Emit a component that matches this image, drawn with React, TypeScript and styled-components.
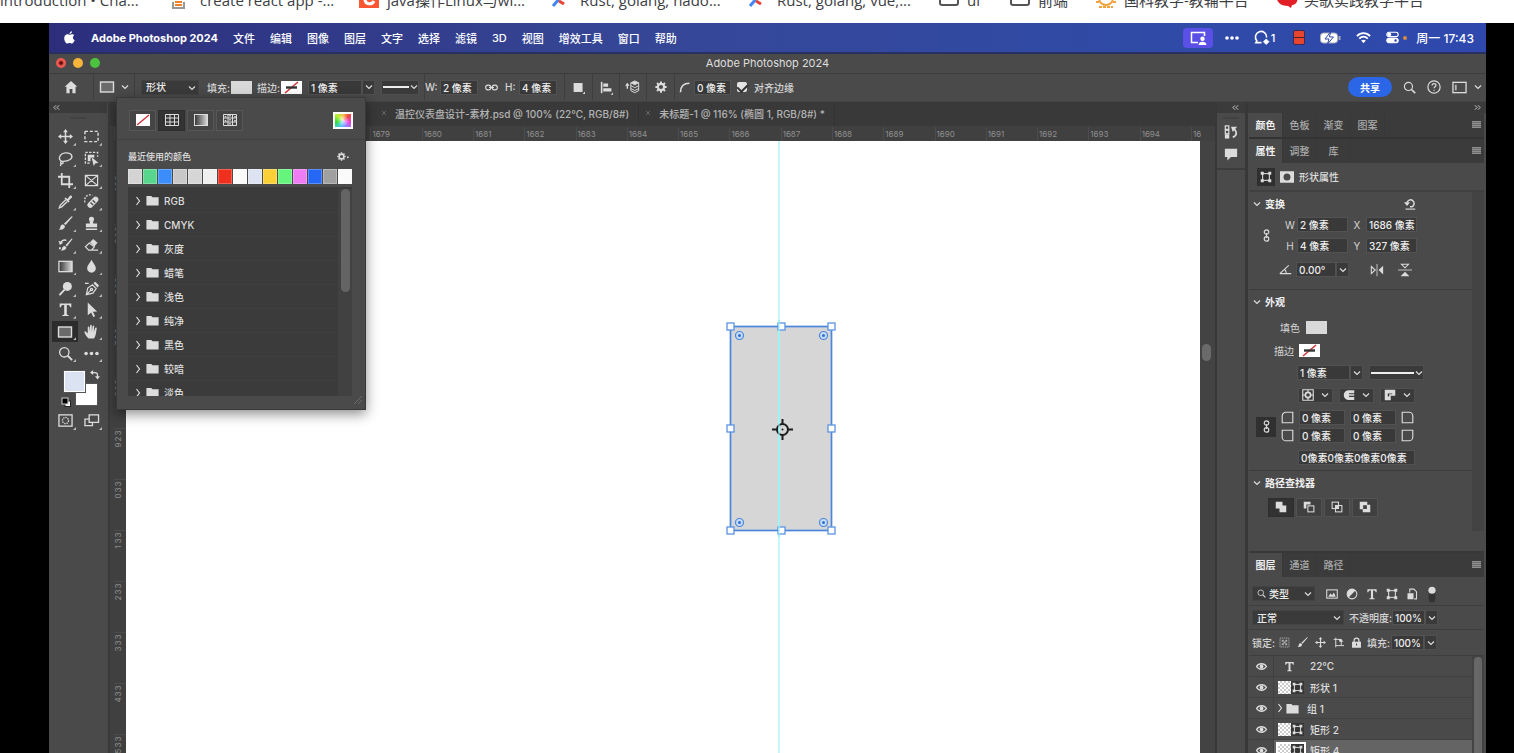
import React from 'react';
import styled, { createGlobalStyle } from 'styled-components';

const UI = `Inter, "Noto Sans CJK SC", sans-serif`;

const Global = createGlobalStyle`
  * { box-sizing: border-box; }
  html, body, #root { height: 100%; }
  body { margin: 0; overflow: hidden; background: #000; font-family: ${UI}; font-size: 10px; color: #dedede; }
  button, input, select { font: inherit; color: inherit; margin: 0; padding: 0; border: 0; background: none; border-radius: 0; }
  h1, h2, ul { margin: 0; padding: 0; font: inherit; list-style: none; }
  svg { display: block; flex: none; overflow: visible; }
`;

/* ---------- icons ---------- */

const Svg = styled.svg<{ $s?: number }>`
  width: ${p => p.$s ?? 16}px;
  height: ${p => p.$s ?? 16}px;
  fill: none;
  stroke: #dcdcdc;
  stroke-width: 1.4;
`;
const S = '#dcdcdc';
const solid = { fill: S, stroke: 'none' };

const ICONS: Record<string, React.ReactNode> = {
  home: <path {...solid} d="M8 1 .8 7.6h2V15h3.600v-4.600h3.200V15h3.600V7.600h2z" />,
  rect: <rect x="1.500" y="3" width="13" height="10" fill="#6b6b6b" />,
  search: <><circle cx="6.700" cy="6.700" r="5" /><path d="m10.400 10.400 4.600 4.600" strokeWidth="2" /></>,
  help: <><circle cx="8" cy="8" r="7" /><path d="M5.800 6.300c.1-3 4.600-2.800 4.500-.2 0 1.600-2.200 1.700-2.200 3.400M8.100 11v1.400" /></>,
  workspace: <><rect x="1" y="2.500" width="14" height="11" /><path d="M4 5v6" strokeWidth="2" stroke="#b5b5b5" /></>,
  link: <><rect x=".8" y="5" width="6.400" height="6" rx="3" /><rect x="8.800" y="5" width="6.400" height="6" rx="3" /><path d="M5 8h6" /></>,
  linkV: <><rect x="5.200" y="1" width="5.600" height="5.600" rx="2.800" /><rect x="5.200" y="9.400" width="5.600" height="5.600" rx="2.800" /><path d="M8 5v6" /></>,
  pathOps: <><rect x="2" y="2.500" width="11" height="11" {...solid} /><path {...solid} d="M13 16h3v-3z" /></>,
  align: <><path d="M2 1v14" strokeWidth="2" /><path {...solid} d="M4 3h6v4H4zM4 9h10v4H4z" /><path {...solid} d="M13 17h3v-3z" /></>,
  arrange: <><path d="M1.500 5v5" strokeWidth="1.600" /><path {...solid} d="M1.500 3 4 6.500H-1z" /><path d="m5.500 3.200 4.500-2.200 4.500 2.200L10 5.400z" fill={S} strokeWidth="1" /><path d="m5.500 6.500 4.500 2.200 4.500-2.200M5.500 9.800 10 12l4.500-2.200M5.500 3.200v9L10 14.500l4.500-2.300v-9" strokeWidth="1.100" /></>,
  gear: <><circle cx="8" cy="8" r="4.200" strokeWidth="2.800" /><path strokeWidth="2.600" d="M8 .5v2.500M8 13v2.500M.5 8H3M13 8h2.500M2.700 2.700l1.700 1.700M11.600 11.600l1.700 1.700M2.700 13.300l1.700-1.700M11.600 4.400l1.700-1.700" /></>,
  arc: <path d="M2 15C2 7 6 3 14 3" strokeWidth="2.200" />,
  move: <><path d="M8 2v12M2 8h12" strokeWidth="1.600" /><path {...solid} d="M8 0l2.600 3.400H5.400zM8 16l2.600-3.400H5.400zM0 8l3.400-2.600v5.200zM16 8l-3.400-2.600v5.200z" /></>,
  marquee: <rect x="1" y="2.500" width="14" height="11" strokeDasharray="3.200 2" strokeWidth="1.500" />,
  lasso: <><path d="M4 11C-.5 9 1.500 2.500 8 2c7-.5 8.500 4.500 5 7-2.500 1.700-6 2.200-9 2zm0 0c-2 .5-1.500 3 .6 2.500C6 13 5.500 11.200 4 11zm-.5 2.200L2.500 16" /></>,
  objSel: <><path d="M6 13H1.500V1.500h13V6" strokeDasharray="2.500 1.500" /><path {...solid} d="M4 4h7v3H7v4H4z" /><path {...solid} d="m8 6.500 7.500 6.300-3.300.3L10.400 16z" /></>,
  crop: <path d="M4 0v12h12M0 4h12v12" strokeWidth="1.900" />,
  frame: <path d="M1.500 2.500h13v11h-13zM1.500 2.500l13 11M14.500 2.500l-13 11" strokeWidth="1.300" />,
  dropper: <><path {...solid} d="M10 5.200 12.600 2c1.300-1.500 3.400.6 2 2L11.500 7l.8.9-1.100 1.100-4.300-4.300L8 3.700z" /><path d="M8.300 6.200 2.300 12l-.9 2.700L4 13.700l6-5.800" /></>,
  heal: <><path d="M1 9C-.5 3 4-.5 9 1.500" strokeDasharray="2 1.400" /><rect x="2.500" y="5.800" width="14" height="6" rx="3" transform="rotate(-45 9.500 8.800)" {...solid} /><path d="m7 9 2.700 2.700M9.300 6.600l2.700 2.700" stroke="#4a4a4a" /></>,
  brush: <path {...solid} d="M15.500 1 8 9.700 6.300 8.200 14.300.6c.7-.5 1.500-.2 1.200.4zM5.600 9l1.800 1.600c.3 2.600-2.800 4.700-6.700 3.700 1.800-.8 1.500-2 2-3.500.4-1.300 1.700-2 2.900-1.800z" />,
  stamp: <path {...solid} d="M8 .8c2 0 3 1.500 2.700 3C10.300 5.300 9.500 6.500 9.800 8H14v4H2V8h4.200c.3-1.500-.5-2.700-.9-4.200C5 2.300 6 .8 8 .8zM2 13.400h12v1.600H2z" />,
  history: <><path {...solid} d="m15.500 2-6 8L8 8.800 14.500 1.500zM7.300 9.600l1.600 1.300c0 2-2 4-6 3.400 1.500-.8 1.300-2 1.700-3 .4-1 1.500-1.900 2.700-1.700z" /><path d="M2.500 7.500C3 4 6 2.500 9 3.500" /><path {...solid} d="M.5 4 2 8.500 5.500 6zM1 11h2v2H1z" /></>,
  eraser: <><path {...solid} d="m9.800 2 4.700 4.200L11 10 6.300 5.700z" /><path d="m5.500 6.500-4 4L5 14h3l3-3.500zM8 14h7" strokeWidth="1.300" /></>,
  gradient: <rect x="1" y="2.500" width="14" height="11" fill="url(#toolGrad)" />,
  drop: <path {...solid} d="M8 .8c1.800 4 4.600 5.800 4.600 9A4.600 4.600 0 0 1 8 14.600a4.600 4.600 0 0 1-4.600-4.800C3.400 6.600 6.200 4.800 8 .8z" />,
  dodge: <><circle cx="10" cy="5.800" r="4.800" {...solid} /><path d="M7 9.200 1.500 15" strokeWidth="2" /></>,
  pen: <><path d="M2.500 14.500 4 7.500 9 4l4 4-3.500 5zM2.500 14.500 7.500 9.500" strokeWidth="1.300" /><circle cx="8" cy="9" r="1.200" /><path {...solid} d="m10 2 2-1.300L16 4.800 14.300 7z" /><path d="M1 2.500h4" /></>,
  type: <path {...solid} d="M1.800 1.500h12.400v4h-1.300c-.2-1.700-.9-2.300-3.500-2.300v9.600c0 .9.700 1 2 1V15H4.600v-1.200c1.300 0 2-.1 2-1V3.200c-2.600 0-3.300.6-3.500 2.300H1.800z" />,
  arrow: <path {...solid} d="M4 .5 14 10l-4.500.3 2.400 4.800-2 .9-2.300-4.900L4 14z" />,
  hand: <path {...solid} d="M5 15.500C3 14 1.500 11.500.6 9.300c-.5-1.500 1-1.900 1.800-.9L4 10V3.800c0-1.400 1.700-1.400 1.800 0l.3 4.400.4-6.400c.1-1.400 1.800-1.400 1.800 0v6.400l.9-5.800c.3-1.300 1.800-1.100 1.700.2l-.5 6 1.500-4.300c.5-1.200 2-.7 1.700.5-.7 3-.7 8.200-3 10.700z" />,
  dots: <><circle cx="2.200" cy="8" r="1.900" {...solid} /><circle cx="8" cy="8" r="1.900" {...solid} /><circle cx="13.800" cy="8" r="1.900" {...solid} /></>,
  mask: <><rect x="1" y="2" width="14" height="12" /><circle cx="8" cy="8" r="3.300" strokeDasharray="1.500 1" /></>,
  screens: <><rect x="5.500" y="2" width="10" height="8" /><path d="M5.500 6.500H1v7h8V10" /></>,
  swap: <><path d="M4 4h4a4 4 0 0 1 4 4v3" strokeWidth="2" /><path {...solid} d="M5 0v8L0 4zM8 10h8l-4 5z" /></>,
  folder: <path {...solid} d="M.5 2.500h6L8 4h7.500v10H.5z" />,
  boundary: <><rect x="3.500" y="3.500" width="9" height="9" strokeWidth="1.400" /><path {...solid} d="M1 1h4v4H1zM11 1h4v4h-4zM1 11h4v4H1zM11 11h4v4h-4z" /></>,
  maskFull: <path {...solid} fillRule="evenodd" d="M0 1.500h16v13H0zM8 4a4 4 0 1 0 0 8 4 4 0 0 0 0-8z" />,
  reset: <><path d="M4 6.200A4.800 4.800 0 1 1 11 11.500H8" strokeWidth="2" /><path {...solid} d="M0 5.500h8L4 10.500z" /><path d="M2 14.800h13" strokeWidth="1.500" /></>,
  angle: <path d="M1 13h14M1 13 12 3M9 13c0-2-.6-3.300-1.800-4.800" />,
  flipH: <><path d="M8 1v14" stroke="#aaa" /><path d="M1.500 4v8L6 8z" strokeWidth="1.200" /><path {...solid} d="M15 3v10L9.800 8z" /></>,
  flipV: <><path d="M0 8h16" stroke="#aaa" /><path d="M4 1.500h8L8 5.500z" strokeWidth="1.200" /><path {...solid} d="M3 15h10L8 10z" /></>,
  history2: <><rect x="1.500" y="1" width="4" height="4" /><rect x="1.500" y="6" width="4" height="4" /><rect x="1" y="10.500" width="5" height="5" {...solid} /><path d="M10 14c5-2 5-6 2-9" strokeWidth="2" /><path {...solid} d="M8 2h7l-5 6z" /></>,
  comment: <path {...solid} d="M1 2h14v9.500H8L3.800 15.500v-4H1z" />,
  strokeAlign: <><path d="M1 1h14v14H1z" strokeWidth="1.500" /><circle cx="8" cy="8" r="3.500" strokeWidth="2.200" /><path d="M8 1v3M8 12v3M1 8h3M12 8h3" /></>,
  caps: <path {...solid} d="M7 1.500h8v4H8v1.500h7v2H8v1.500h7v4H7C-1 14-1 2 7 1.500z" />,
  corners: <path {...solid} fillRule="evenodd" d="M1 1h14v8H9v6H1zM5 6v4h2V7h4V6z" />,
  cTL: <path d="M1.500 14.500V6a4.500 4.500 0 0 1 4.500-4.500h8.500v13z" />,
  cTR: <path d="M1.500 1.500H10A4.500 4.500 0 0 1 14.500 6v8.500h-13z" />,
  cBL: <path d="M1.500 1.500h13v13H6A4.500 4.500 0 0 1 1.500 10z" />,
  cBR: <path d="M1.500 1.500h13V10a4.500 4.500 0 0 1-4.500 4.500H1.500z" />,
  unite: <path {...solid} d="M1 1h9v5h5v9H6v-5H1z" />,
  minus: <><path {...solid} d="M1 1h9v3.500H4.500V10H1z" /><rect x="6.500" y="6.500" width="8" height="8" /></>,
  intersect: <><rect x="1.500" y="1.500" width="8.500" height="8.500" /><rect x="6" y="6" width="8.500" height="8.500" /><path {...solid} d="M6 6h4v4H6z" /></>,
  exclude: <path {...solid} fillRule="evenodd" d="M1 1h10v4h4v10H5v-4H1zM5.500 5.500v5h5v-5z" />,
  image: <><rect x="1" y="2.500" width="14" height="11" /><path {...solid} d="M3 11.500 6 7l2 2.500L10.500 6l2.500 5.500z" /></>,
  adjust: <><circle cx="8" cy="8" r="6.500" /><path {...solid} d="M12.600 3.400A6.500 6.500 0 1 0 3.400 12.600z" /></>,
  smart: <><path d="M5 6V1.500h5.500L14 5v9.500h-3" /><rect x="2" y="7" width="8" height="8" {...solid} /></>,
  toggle: <><rect x="3.500" y="2" width="9" height="17" rx="4.500" fill="#333" stroke="none" /><circle cx="8" cy="3" r="4.800" {...solid} /></>,
  lockPix: <><rect x="1.500" y="1.500" width="13" height="13" stroke="#aaa" strokeDasharray="2 1" /><path fill="#aaa" stroke="none" d="M4 4h3v3H4zM9 4h3v3H9zM6.500 6.500h3v3h-3zM4 9h3v3H4zM9 9h3v3H9z" /></>,
  artboard: <><path d="M4 1v14M1 3.500h11M4 12.500h12" /><path d="M12 4v8" /><path {...solid} d="M9 3h3l3 4h-6z" /></>,
  lock: <><path d="M4.500 8V5a3.500 3.500 0 0 1 7 0v3" strokeWidth="1.800" /><path {...solid} fillRule="evenodd" d="M1.500 7h13v8.500h-13zM7.200 9.500v3h1.600v-3z" /></>,
  eye: <><path d="M.8 8C4 2.600 12 2.600 15.200 8 12 13.400 4 13.400.8 8z" strokeWidth="2" /><circle cx="8" cy="8" r="2.800" {...solid} /></>,
  apple: <path fill="#fff" stroke="none" d="M11.100.3c.1 1.700-1.400 3.400-3.100 3.400C7.800 2.100 9.400.5 11.100.3zM13.800 5.300c-2.400 1.600-1.900 4.900.6 5.900-.6 1.900-2 4.200-3.500 4.300-1.100 0-1.500-.7-2.800-.7s-1.700.7-2.800.7C3.300 15.500 1.500 12 1.500 9c0-3.300 2.100-5 4.100-5 1.200 0 2 .7 2.900.7.800 0 1.700-.8 3.200-.8.900 0 1.600.5 2.100 1.400z" />,
  cast: <><path d="M8 12.500H1.500v-10h13V6" stroke="#fff" strokeWidth="1.500" /><path fill="#fff" stroke="none" d="M12.500 6.500a2.200 2.200 0 1 1 0 4.400 2.200 2.200 0 0 1 0-4.400zM8.500 15c0-4.500 8-4.500 8 0z" /></>,
  chat: <><path d="M8 13.500H2l1-2a6 6 0 1 1 10.500-3.500" stroke="#fff" strokeWidth="1.700" /><path d="M13 9.500 16 12.500 13 15.500 10 12.500z" stroke="#fff" fill="#fff" strokeWidth=".8" /></>,
  wifi: <><path d="M1 6.500c4-4.300 10-4.300 14 0M3.500 9.200c2.700-2.700 6.300-2.700 9 0" stroke="#fff" strokeWidth="2" /><path fill="#fff" stroke="none" d="M5.500 11.300c1.600-1.300 3.400-1.300 5 0L8 14z" /></>,
  control: <><rect x="1" y="1.500" width="14" height="5.500" rx="2.700" stroke="#fff" /><circle cx="4" cy="4.200" r="2.400" fill="#fff" stroke="none" /><rect x="1" y="9" width="14" height="5.500" rx="2.700" fill="#fff" stroke="#fff" /><circle cx="11.800" cy="11.800" r="1.500" fill="#3048a8" stroke="none" /></>,
};

const Icon = ({ n, s }: { n: string; s?: number }) => (
  <Svg viewBox="0 0 16 16" $s={s} aria-hidden="true">{ICONS[n]}</Svg>
);

const Chevron = ({ right = false }: { right?: boolean }) => (
  <Svg viewBox="0 0 8 8" $s={8} aria-hidden="true">
    <path d={right ? 'M2.500 0 5.500 4 2.500 8' : 'M1 2.500 4 5.500 7 2.500'} strokeWidth="1.200" />
  </Svg>
);

const Double = ({ right = false }: { right?: boolean }) => (
  <Svg viewBox="0 0 8 8" $s={7} aria-hidden="true">
    <path d={right ? 'M1 1.500 3.500 4 1 6.500M4.500 1.500 7 4 4.500 6.500' : 'M3.500 1.500 1 4l2.500 2.500M7 1.500 4.500 4 7 6.500'} strokeWidth="1" />
  </Svg>
);

const StrokeArt = styled.svg`
  width: 21px;
  height: 13px;
`;
const NoStroke = () => (
  <StrokeArt viewBox="0 0 21 13" aria-hidden="true">
    <rect width="21" height="13" fill="#fff" />
    <path d="M4 12 17 1" stroke="#d3343c" strokeWidth="1.600" />
    <path d="M5 6.500h11" stroke="#333" strokeWidth="2.400" />
  </StrokeArt>
);

/* ---------- browser bookmarks ---------- */

const Page = styled.div`
  height: 100%;
  display: flex;
  flex-direction: column;
`;
const Bookmarks = styled.nav`
  flex: none;
  height: 23px;
  background: #fff;
  display: flex;
  align-items: flex-end;
  padding-bottom: 13px;
  overflow: hidden;
`;
const Bookmark = styled.a<{ $w: number }>`
  flex: none;
  width: ${p => p.$w}px;
  display: flex;
  align-items: flex-end;
  gap: 7px;
  color: #3c4043;
  text-decoration: none;
  white-space: nowrap;
  font: 15px/20px "Open Sans", "Noto Sans CJK SC", sans-serif;
`;
const Fav = styled.svg`
  width: 21px;
  height: 20px;
  fill: none;
`;
const FAVS: Record<string, React.ReactNode> = {
  stack: <><path d="M1 12v6h11v-6" stroke="#999" strokeWidth="2" /><path d="M3 15h7M3 12h7" stroke="#f48024" strokeWidth="2" /></>,
  c: <><rect width="20" height="18" fill="#fc5531" /><path d="M15 11c-2 4-9 4-9-2" stroke="#fff" strokeWidth="3" /></>,
  cross: <><path d="M1 16l6-7" stroke="#4285f4" strokeWidth="3" /><path d="M7 11l5 3" stroke="#ea4335" strokeWidth="3" /></>,
  folder: <rect x="1" y="2" width="18" height="13" rx="2" stroke="#555" strokeWidth="2" />,
  bear: <><circle cx="10" cy="8" r="7" stroke="#f2a33c" strokeWidth="2" /><path d="M0 12h20" stroke="#f2a33c" strokeWidth="2" strokeDasharray="3 14" /><path d="M3 17h14" stroke="#f2a33c" strokeWidth="2" strokeDasharray="3 1" /></>,
  red: <path d="M10 0c14 0 14 15 6 15l-1 3-3-2C-3 16-2 0 10 0z" fill="#e01f26" />,
};
const BOOKMARKS = [
  ['introduction • Cha...', '', 172],
  ['create react app -...', 'stack', 187],
  ['java操作Linux与wi...', 'c', 193],
  ['Rust, golang, hado...', 'cross', 197],
  ['Rust, golang, vue,...', 'cross', 190],
  ['ui', 'folder', 71],
  ['前端', 'folder', 86],
  ['国科教学-教辅平台', 'bear', 180],
  ['头歌实践教学平台', 'red', 170],
] as const;

/* ---------- desktop ---------- */

const Screen = styled.main`
  flex: 1;
  min-height: 0;
  margin: 0 28px 0 49px;
  background: #4a4a4a;
  display: flex;
  flex-direction: column;
`;
const MenuBar = styled.header`
  flex: none;
  height: 31px;
  display: flex;
  align-items: center;
  padding: 0 14px;
  background: linear-gradient(90deg, #2c2e7c, #364696 40%, #304ba6 75%, #2f48ae);
  border-bottom: 2px solid #27305f;
  color: #fff;
  font-size: 11px;
  font-weight: 500;
`;
const AppName = styled.strong`
  margin: 0 15px;
  font-weight: 700;
  white-space: nowrap;
`;
const MenuItems = styled.nav`
  display: flex;
  gap: 15px;
  flex: 1;
`;
const MenuItem = styled.button`white-space: nowrap;`;
const Status = styled.div`
  display: flex;
  align-items: center;
  gap: 15px;
`;
const CastBadge = styled.span`
  width: 30px;
  height: 20px;
  margin-right: -3px;
  border-radius: 4px;
  background: #5b50e6;
  display: grid;
  place-items: center;
`;
const Inline = styled.span<{ $gap?: number; $end?: number }>`
  display: flex;
  align-items: center;
  gap: ${p => p.$gap ?? 2}px;
  margin-right: ${p => p.$end ?? 0}px;
  white-space: nowrap;
`;
const RedChip = styled.span`
  width: 12px;
  height: 15px;
  border-radius: 2px;
  border: 1px solid #3a2a55;
  background: linear-gradient(#e8452f 6px, #4d2030 6px, #4d2030 7px, #e8452f 7px);
`;
const BatteryArt = styled.svg`
  width: 21px;
  height: 12px;
`;
const OrangeDot = styled.span`
  width: 4px;
  height: 4px;
  border-radius: 50%;
  background: #d98a3e;
`;
const Clock = styled.time`
  font-size: 12px;
  margin: 0 -2px 0 -6px;
  white-space: nowrap;
`;

const TitleBar = styled.div`
  flex: none;
  height: 20px;
  display: grid;
  grid-template-columns: 1fr auto 1fr;
  align-items: center;
  padding: 0 7px 1px;
  border-bottom: 1px solid #3c3c3c;
  font-size: 11px;
`;
const Lights = styled.div`display: flex; gap: 7px;`;
const Light = styled.button<{ $c: string; $dot?: boolean }>`
  width: 10px;
  height: 10px;
  border-radius: 50%;
  background: ${p => (p.$dot ? `radial-gradient(circle, #5c0d0a 1px, ${p.$c} 3px)` : p.$c)};
`;

/* ---------- options bar ---------- */

const OptionsBar = styled.div`
  flex: none;
  height: 28px;
  padding-bottom: 1px;
  display: flex;
  align-items: center;
  border-bottom: 1px solid #444;
  font-weight: 500;
`;
const Cell = styled.div<{ $w: number; $gap?: number; $sep?: boolean }>`
  flex: none;
  width: ${p => p.$w}px;
  height: 26px;
  display: flex;
  align-items: center;
  justify-content: center;
  gap: ${p => p.$gap ?? 0}px;
  border-right: ${p => (p.$sep ? '1px solid #3e3e3e' : '0')};
`;
const IconButton = styled.button<{ $on?: boolean }>`
  display: flex;
  align-items: center;
  background: ${p => (p.$on ? '#2f2f2f' : 'none')};
`;
const Fields = styled.div<{ $gap: number; $pad?: number }>`
  flex: none;
  display: flex;
  align-items: center;
  gap: ${p => p.$gap}px;
  padding-left: ${p => p.$pad ?? 0}px;
`;
const Label = styled.label<{ $w?: number }>`
  flex: none;
  width: ${p => (p.$w ? `${p.$w}px` : 'auto')};
  white-space: nowrap;
  color: #d4d4d4;
`;
const Field = styled.input<{ $w: number }>`
  width: ${p => p.$w}px;
  height: 15px;
  line-height: 13px;
  padding: 0 0 0 2px;
  background: #393939;
  border: 1px solid #525252;
  color: #ececec;
  font-weight: 500;
`;
const SelectWrap = styled.span<{ $w: number }>`
  position: relative;
  flex: none;
  width: ${p => p.$w}px;
  height: 15px;
  svg { position: absolute; right: 3px; top: 4px; pointer-events: none; }
`;
const Select = styled.select<{ $pad?: number }>`
  appearance: none;
  display: block;
  width: 100%;
  height: 15px;
  padding-left: ${p => p.$pad ?? 4}px;
  background: #3a3a3a;
  border: 1px solid #434343;
  color: #ececec;
  font-weight: 500;
`;
const DropButton = styled.button<{ $w: number }>`
  flex: none;
  width: ${p => p.$w}px;
  height: 15px;
  display: flex;
  align-items: center;
  justify-content: space-around;
  background: #3a3a3a;
  border: 1px solid #4f4f4f;
`;
const LineSample = styled.span`
  flex: 1;
  height: 2px;
  margin: 0 1px;
  background: #eee;
`;
const Swatch = styled.button`
  width: 21px;
  height: 13px;
  background: #d9d9d9;
`;
const Tick = styled.input`
  appearance: none;
  width: 10px;
  height: 10px;
  border-radius: 2px;
  background: #e4e4e4;
  display: grid;
  place-items: center;
  &:checked::before {
    content: '';
    width: 5px;
    height: 8px;
    border: solid #333;
    border-width: 0 2px 2px 0;
    transform: rotate(45deg);
  }
`;
const Spacer = styled.div`flex: 1;`;
const Share = styled.button`
  width: 44px;
  height: 20px;
  border-radius: 10px;
  background: #2a66e6;
  color: #fff;
  font-weight: 600;
`;
const RightTools = styled.div`
  display: flex;
  align-items: center;
  gap: 11px;
  padding-right: 4px;
`;
const WorkspaceButton = styled(IconButton)`gap: 7px;`;

const Combo = ({ w, value, label, id }: { w: number; value: string; label: string; id?: string }) => (
  <Fields $gap={0}>
    <Field $w={w} id={id} aria-label={label} defaultValue={value} />
    <DropButton $w={13} aria-label={`${label}选项`}><Chevron /></DropButton>
  </Fields>
);
const DropDown = ({ w, value, label, pad }: { w: number; value: string; label: string; pad?: number }) => (
  <SelectWrap $w={w}>
    <Select aria-label={label} $pad={pad}><option>{value}</option></Select>
    <Chevron />
  </SelectWrap>
);

/* ---------- work area ---------- */

const Work = styled.div`
  flex: 1;
  min-height: 0;
  display: flex;
  position: relative;
`;
const ToolColumn = styled.aside`
  flex: none;
  width: 61px;
  padding: 0 4px 0 3px;
  border-right: 2px solid #3a3a3a;
`;
const DockHeader = styled.div<{ $right?: boolean }>`
  flex: none;
  height: 11px;
  margin: 0 -3px;
  padding: 0 6px 0 4px;
  display: flex;
  align-items: center;
  justify-content: ${p => (p.$right ? 'flex-end' : 'flex-start')};
  background: #3b3b3b;
`;
const Grip = styled.div`
  width: 16px;
  height: 2px;
  margin: 4px auto 7px;
  background: #414141;
`;
const ToolGrid = styled.div`
  height: 238px;
  display: grid;
  grid-template-columns: 1fr 1fr;
  grid-auto-rows: 1fr;
`;
const Tool = styled.button<{ $on?: boolean }>`
  position: relative;
  display: grid;
  place-items: center;
  background: ${p => (p.$on ? '#2c2c2c' : 'none')};
  &::after {
    content: '';
    position: absolute;
    right: 2px;
    bottom: 2px;
    width: 3px;
    height: 3px;
    background: #bbb;
    clip-path: polygon(100% 0, 100% 100%, 0 100%);
  }
`;
const Colors = styled.div`
  position: relative;
  height: 44px;
`;
const Color = styled.button<{ $x: number; $y: number; $c: string }>`
  position: absolute;
  left: ${p => p.$x}px;
  top: ${p => p.$y}px;
  width: 21px;
  height: 21px;
  background: ${p => p.$c};
  border: 1px solid #fff;
  outline: 1px solid #555;
`;
const Corner = styled.button<{ $x: number; $y: number }>`
  position: absolute;
  left: ${p => p.$x}px;
  top: ${p => p.$y}px;
`;
const ModeRow = styled.div`
  height: 24px;
  display: grid;
  grid-template-columns: 1fr 1fr;
`;

const Doc = styled.section`
  flex: 1;
  min-width: 0;
  display: flex;
  flex-direction: column;
  background: #404040;
`;
const DocTabs = styled.div`
  flex: none;
  height: 24px;
  display: flex;
  background: #393939;
  padding-left: 265px;
`;
const DocTab = styled.button`
  display: flex;
  align-items: center;
  gap: 8px;
  padding: 0 9px 2px 6px;
  border-right: 1px solid #333;
  color: #b4b4b4;
  font-weight: 500;
  white-space: nowrap;
`;
const HRuler = styled.div`
  flex: none;
  height: 15px;
  display: flex;
  padding: 1px 14px 0 4px;
  background: #404040;
  overflow: hidden;
`;
const HTick = styled.span<{ $last?: boolean }>`
  flex: ${p => (p.$last ? '0 0 10px' : '1 1 0')};
  border-left: 1px solid #4c4c4c;
  padding-left: 1px;
  font-size: 8px;
  line-height: 14px;
  color: #909090;
`;
const DocBody = styled.div`
  flex: 1;
  min-height: 0;
  display: flex;
`;
const VRuler = styled.div`
  flex: none;
  width: 16px;
  padding-top: 32px;
  overflow: hidden;
  background: #404040;
`;
const VTick = styled.div`
  height: 51px;
  margin-left: 4px;
  padding: 1px 4px 0 0;
  border-top: 1px solid #4c4c4c;
  display: flex;
  flex-direction: column;
  align-items: center;
  font-size: 8px;
  color: #909090;
`;
const Digit = styled.span`
  height: 6px;
  line-height: 6px;
  transform: rotate(-90deg);
`;
const Canvas = styled.div`
  flex: 1;
  position: relative;
  background: #fff;
  overflow: hidden;
`;
const Guide = styled.div`
  position: absolute;
  left: 652px;
  top: 0;
  bottom: 0;
  width: 2px;
  background: #9ff3f5;
  opacity: .6;
`;
const ShapeArt = styled.svg`
  position: absolute;
  left: 598px;
  top: 179px;
  width: 114px;
  height: 217px;
`;
const VScroll = styled.div`
  flex: none;
  width: 15px;
  padding-top: 203px;
  background: #434343;
`;
const Thumb = styled.div`
  width: 9px;
  height: 17px;
  margin-left: 2px;
  border-radius: 5px;
  background: #6a6a6a;
`;

/* ---------- fill popover ---------- */

const Popover = styled.div`
  position: absolute;
  left: 67px;
  top: -5px;
  width: 250px;
  height: 313px;
  padding: 0 13px 0 11px;
  display: flex;
  flex-direction: column;
  background: #4a4a4a;
  border: 1px solid #383838;
  box-shadow: 0 4px 12px rgba(0, 0, 0, .45);
`;
const FillTypes = styled.div`
  height: 42px;
  margin: 0 -13px 0 -11px;
  padding: 3px 12px 0;
  display: flex;
  align-items: center;
  gap: 2px;
  border-bottom: 1px solid #404040;
`;
const FillType = styled.button<{ $on?: boolean }>`
  width: 27px;
  height: 21px;
  display: grid;
  place-items: center;
  background: ${p => (p.$on ? '#333' : '#454545')};
  border: 1px solid ${p => (p.$on ? '#2e2e2e' : '#575757')};
`;
const Picker = styled.button`
  width: 20px;
  height: 17px;
  border: 2px solid #fff;
  background: radial-gradient(circle, rgba(255,255,255,.8), transparent 60%),
    conic-gradient(#f0c03c, #e44, #e4d, #88f, #4cf, #3d3, #be3, #f0c03c);
`;
const RecentHead = styled.h2`
  height: 29px;
  padding: 3px 3px 0 0;
  display: flex;
  align-items: center;
  justify-content: space-between;
  font-size: 9px;
  font-weight: 500;
`;
const Recents = styled.div`
  display: grid;
  grid-template-columns: repeat(15, 1fr);
  gap: 1px;
`;
const Recent = styled.button<{ $c: string }>`
  height: 15px;
  background: ${p => p.$c};
  border: 1px solid rgba(255, 255, 255, .25);
`;
const Groups = styled.div`
  height: 209px;
  margin-top: 3px;
  padding-top: 2px;
  display: flex;
  overflow: hidden;
  background: #3b3b3b;
`;
const GroupList = styled.ul`flex: 1;`;
const GroupRow = styled.li`
  height: 24px;
  padding-left: 6px;
  border-bottom: 1px solid #3f3f3f;
  display: flex;
  align-items: center;
  gap: 4px;
  font-weight: 500;
  span { padding-left: 1px; }
`;
const GroupScroll = styled.div`
  width: 14px;
  background: #414141;
`;
const GroupThumb = styled.div`
  width: 9px;
  height: 103px;
  margin: 0 3px;
  border-radius: 5px;
  background: #646464;
`;
const Grab = styled.div`display: flex; justify-content: flex-end; margin-right: -10px;`;

/* ---------- right docks ---------- */

const Strip = styled.aside`
  flex: none;
  width: 32px;
  padding: 0 3px;
  border: solid #383838;
  border-width: 0 2px;
`;
const StripBox = styled.div`
  height: 57px;
  margin: 0 -3px;
  border-bottom: 2px solid #3c3c3c;
  display: flex;
  flex-direction: column;
  align-items: center;
  gap: 8px;
`;
const StripGrip = styled(Grip)`margin-bottom: -2px;`;
const Panels = styled.aside`
  flex: none;
  width: 239px;
  padding: 0 2px 0 1px;
  display: flex;
  flex-direction: column;
  overflow: hidden;
  border-left: 1px solid #383838;
`;
const Tabs = styled.div<{ $gap?: boolean }>`
  flex: none;
  height: ${p => (p.$gap ? 26 : 24)}px;
  border-bottom: ${p => (p.$gap ? '2px solid #333' : '0')};
  display: flex;
  background: #3b3b3b;
`;
const Tab = styled.button<{ $on?: boolean }>`
  width: 34px;
  padding-bottom: 2px;
  background: ${p => (p.$on ? '#4a4a4a' : 'none')};
  color: ${p => (p.$on ? '#f0f0f0' : '#aaa')};
  border-right: 1px solid #383838;
  font-weight: ${p => (p.$on ? 700 : 500)};
`;
const PanelMenu = styled.button`
  width: 9px;
  height: 7px;
  margin: 8px 3px 0 auto;
  background: repeating-linear-gradient(#8f8f8f 0 1px, #6e6e6e 1px 2px);
`;
const KindRow = styled.div`
  flex: none;
  height: 29px;
  display: flex;
  align-items: center;
  gap: 5px;
  padding-left: 8px;
  border-bottom: 2px solid #404040;
  font-weight: 500;
`;
const KindButton = styled(IconButton)`padding: 3px;`;
const PropsBody = styled.div`
  flex: none;
  display: flex;
  height: 361px;
  border-bottom: 2px solid #383838;
`;
const PropsMain = styled.div`flex: 1;`;
const PropsScroll = styled.div`
  width: 12px;
  height: 339px;
  background: #434343;
`;
const Section = styled.section<{ $h: number }>`
  height: ${p => p.$h}px;
  border-bottom: 1px solid #3c3c3c;
`;
const SectionHead = styled.h2`
  height: 25px;
  display: flex;
  align-items: center;
  gap: 4px;
  padding: 0 56px 2px 4px;
  color: #f0f0f0;
  font-weight: 700;
  button:last-child { margin-left: auto; }
`;
const Transform = styled.div`
  display: grid;
  grid-template-columns: 34px 14px 51px 18px 51px;
  grid-auto-rows: 15px;
  row-gap: 6px;
  justify-items: center;
  align-items: center;
`;
const LinkCell = styled.div`grid-row: span 2;`;
const AngleRow = styled.div`
  display: flex;
  align-items: center;
  gap: 4px;
  margin: 9px 0 0 30px;
`;
const Flips = styled.div`
  display: flex;
  gap: 14px;
  margin-left: 17px;
`;
const Row = styled.div<{ $h: number; $pad: number; $gap: number }>`
  height: ${p => p.$h}px;
  padding-left: ${p => p.$pad}px;
  display: flex;
  align-items: center;
  gap: ${p => p.$gap}px;
`;
const CornerGrid = styled.div`
  display: grid;
  grid-template-columns: 20px 13px 46px 46px 13px;
  grid-auto-rows: 15px;
  gap: 3px 5px;
  padding: 4px 0 0 7px;
  align-items: center;
`;
const LinkButton = styled.button`
  grid-row: span 2;
  width: 20px;
  height: 20px;
  background: #303030;
  display: grid;
  place-items: center;
`;
const OpButton = styled.button<{ $on?: boolean }>`
  width: 26px;
  height: 19px;
  display: grid;
  place-items: center;
  background: ${p => (p.$on ? '#323232' : '#404040')};
  border: 1px solid ${p => (p.$on ? '#2e2e2e' : '#525252')};
`;
const LayerBar = styled.div<{ $h: number; $top?: number }>`
  flex: none;
  height: ${p => p.$h}px;
  padding: ${p => p.$top ?? 0}px 0 0 3px;
  display: flex;
  align-items: center;
  gap: 5px;
  border-bottom: 1px solid #3e3e3e;
  font-weight: 500;
`;
const IconSet = styled.div<{ $gap: number; $pad: number }>`
  display: flex;
  gap: ${p => p.$gap}px;
  padding: 0 ${p => p.$pad}px;
`;
const TypeSelect = styled(SelectWrap)`
  svg:first-child { left: 5px; top: 3px; right: auto; }
`;
const LayerArea = styled.div`
  flex: 1;
  min-height: 0;
  display: flex;
  overflow: hidden;
`;
const LayerList = styled.ul`flex: 1;`;
const Layer = styled.li<{ $on?: boolean }>`
  height: 21px;
  display: flex;
  align-items: center;
  border-bottom: 1px solid #414141;
  background: ${p => (p.$on ? 'linear-gradient(90deg, transparent 25px, #646464 25px)' : 'none')};
  font-weight: 500;
`;
const Eye = styled.button`
  flex: none;
  width: 25px;
  height: 100%;
  border-right: 1px solid #404040;
  display: grid;
  place-items: center;
`;
const Thumbs = styled.span<{ $on?: boolean }>`
  display: flex;
  align-items: center;
  margin: 0 6px 0 4px;
  background: #363636;
  outline: ${p => (p.$on ? '2px solid #fff' : '0')};
  i + svg { margin: 0 1px; }
`;
const Checker = styled.i`
  width: 13px;
  height: 13px;
  background: repeating-conic-gradient(#ccc 0 25%, #fff 0 50%) 0 0 / 4px 4px;
`;
const TextThumb = styled.span`padding: 0 15px 0 10px;`;
const GroupThumbIcon = styled.span`
  display: flex;
  align-items: center;
  gap: 2px;
  padding: 0 8px 0 2px;
`;
const LayerScroll = styled.div`
  width: 12px;
  background: #434343;
  padding: 1px 2px 0;
`;
const LayerThumb = styled.div`
  height: 120px;
  border-radius: 4px;
  background: #676767;
`;

const TOOLS = ['move', 'marquee', 'lasso', 'objSel', 'crop', 'frame', 'dropper', 'heal', 'brush', 'stamp', 'history', 'eraser',
  'gradient', 'drop', 'dodge', 'pen', 'type', 'arrow', 'rect', 'hand', 'search', 'dots'];
const RECENTS = ['#d4d4d4', '#58d68d', '#3a8dfb', '#c8c8c8', '#d6d6d6', '#efefef', '#f0301e', '#fafafa', '#dde3f2', '#fbcf36',
  '#66f57c', '#ee7cf2', '#2668f6', '#a0a0a0', '#fafafa'];
const GROUPS = ['RGB', 'CMYK', '灰度', '蜡笔', '浅色', '纯净', '黑色', '较暗', '淡色'];
const MENUS = ['文件', '编辑', '图像', '图层', '文字', '选择', '滤镜', '3D', '视图', '增效工具', '窗口', '帮助'];
const XLABELS = Array.from({ length: 21 }, (_, i) => 1674 + i);
const YLABELS = Array.from({ length: 12 }, (_, i) => 324 + i);

const handles = [[6, 6], [57, 6], [107, 6], [6, 108], [107, 108], [6, 210], [57, 210], [107, 210]];
const radii = [[15, 15], [99, 15], [15, 202], [99, 202]];

const EyeToggle = () => <Eye aria-label="可见"><Icon n="eye" s={11} /></Eye>;
const ShapeThumb = ({ on }: { on?: boolean }) => <Thumbs $on={on}><Checker /><Icon n="boundary" s={11} /></Thumbs>;
const CloseMark = () => (
  <Svg viewBox="0 0 6 6" $s={6}><path d="M1 1l4 4M5 1 1 5" stroke="#666" strokeWidth="1" /></Svg>
);

export default function App() {
  return (
    <Page>
      <Global />
      <Bookmarks>
        {BOOKMARKS.map(([text, fav, w]) => (
          <Bookmark key={text} href="#" $w={w}>
            {fav && <Fav viewBox="0 0 21 20">{FAVS[fav]}</Fav>}
            {text}
          </Bookmark>
        ))}
      </Bookmarks>
      <Screen>
        <MenuBar>
          <Icon n="apple" s={13} />
          <AppName>Adobe Photoshop 2024</AppName>
          <MenuItems>{MENUS.map(m => <MenuItem key={m}>{m}</MenuItem>)}</MenuItems>
          <Status>
            <CastBadge><Icon n="cast" s={16} /></CastBadge>
            <Svg viewBox="0 0 14 14" $s={14}>
              <g fill="#fff" stroke="none"><circle cx="2" cy="7" r="1.800" /><circle cx="7" cy="7" r="1.800" /><circle cx="12" cy="7" r="1.800" /></g>
            </Svg>
            <Inline $end={3}><Icon n="chat" s={15} />1</Inline>
            <RedChip />
            <BatteryArt viewBox="0 0 21 12">
              <rect x=".5" y="1" width="17" height="10" rx="3" fill="#fff" stroke="#aab" />
              <path d="M19.500 4v4" stroke="#aab" strokeWidth="2" />
              <path d="M10.500 0 5 7h4l-1.500 5L13.500 5h-4z" fill="#fff" stroke="#3048a8" strokeWidth="1" />
            </BatteryArt>
            <Icon n="wifi" s={15} />
            <Inline $gap={4}><Icon n="control" s={13} /><OrangeDot /></Inline>
            <Clock>周一 17:43</Clock>
          </Status>
        </MenuBar>

        <TitleBar>
          <Lights>
            <Light $c="#ee5a50" $dot aria-label="关闭" />
            <Light $c="#f5b43c" aria-label="最小化" />
            <Light $c="#4cc33e" aria-label="缩放" />
          </Lights>
          <h1>Adobe Photoshop 2024</h1>
        </TitleBar>

        <OptionsBar>
          <Cell $w={45} $sep><IconButton aria-label="主页"><Icon n="home" s={14} /></IconButton></Cell>
          <Cell $w={41} $gap={6} $sep><Icon n="rect" /><Chevron /></Cell>
          <Fields $gap={8} $pad={6}>
            <DropDown w={58} value="形状" label="工具模式" />
            <Fields $gap={0}><Label $w={24}>填充:</Label><Swatch aria-label="填充" /></Fields>
          </Fields>
          <Fields $gap={6} $pad={5}>
            <Fields $gap={0}><Label $w={24}>描边:</Label><IconButton aria-label="描边"><NoStroke /></IconButton></Fields>
            <Combo w={54} value="1 像素" label="描边宽度" />
            <DropButton $w={38} aria-label="描边类型"><LineSample /><Chevron /></DropButton>
          </Fields>
          <Cell $w={6} $sep />
          <Label $w={15} htmlFor="optW">W:</Label>
          <Field $w={38} id="optW" defaultValue="2 像素" />
          <Cell $w={27}><IconButton aria-label="链接"><Icon n="link" s={13} /></IconButton></Cell>
          <Label $w={14} htmlFor="optH">H:</Label>
          <Field $w={38} id="optH" defaultValue="4 像素" />
          <Cell $w={8} $sep />
          <Cell $w={28} $sep><IconButton aria-label="路径操作"><Icon n="pathOps" s={13} /></IconButton></Cell>
          <Cell $w={27} $sep><IconButton aria-label="对齐"><Icon n="align" s={13} /></IconButton></Cell>
          <Cell $w={27} $sep><IconButton aria-label="排列"><Icon n="arrange" s={14} /></IconButton></Cell>
          <Cell $w={28} $sep><IconButton aria-label="设置"><Icon n="gear" s={12} /></IconButton></Cell>
          <Cell $w={19}><Icon n="arc" s={12} /></Cell>
          <Field $w={37} aria-label="圆角半径" defaultValue="0 像素" />
          <Fields $gap={7} $pad={6}>
            <Tick type="checkbox" id="snap" defaultChecked />
            <Label htmlFor="snap">对齐边缘</Label>
          </Fields>
          <Spacer />
          <RightTools>
            <Share>共享</Share>
            <IconButton aria-label="搜索"><Icon n="search" s={13} /></IconButton>
            <IconButton aria-label="帮助"><Icon n="help" s={14} /></IconButton>
            <WorkspaceButton aria-label="工作区"><Icon n="workspace" s={15} /><Chevron /></WorkspaceButton>
          </RightTools>
        </OptionsBar>

        <Work>
          <ToolColumn>
            <DockHeader><Double /></DockHeader>
            <Grip />
            <ToolGrid>
              {TOOLS.map(t => <Tool key={t} $on={t === 'rect'} aria-label={t}><Icon n={t} s={t === 'rect' ? 16 : 15} /></Tool>)}
            </ToolGrid>
            <Colors>
              <Color $x={24} $y={20} $c="#fff" aria-label="背景色" />
              <Color $x={12} $y={7} $c="#dbe3f2" aria-label="前景色" />
              <Corner $x={38} $y={6} aria-label="切换颜色"><Icon n="swap" s={10} /></Corner>
              <Corner $x={9} $y={33} aria-label="默认颜色">
                <Svg viewBox="0 0 10 10" $s={10}>
                  <rect x="4" y="4" width="5.500" height="5.500" fill="#fff" stroke="#222" strokeWidth="1" />
                  <rect x="1" y="1" width="6" height="6" fill="#000" stroke="#ccc" strokeWidth="1" />
                </Svg>
              </Corner>
            </Colors>
            <ModeRow>
              <Tool aria-label="快速蒙版"><Icon n="mask" s={15} /></Tool>
              <Tool aria-label="屏幕模式"><Icon n="screens" s={15} /></Tool>
            </ModeRow>
          </ToolColumn>

          <Doc>
            <DocTabs>
              <DocTab><CloseMark />温控仪表盘设计-素材.psd @ 100% (22℃, RGB/8#)</DocTab>
              <DocTab><CloseMark />未标题-1 @ 116% (椭圆 1, RGB/8#) *</DocTab>
            </DocTabs>
            <HRuler>
              {XLABELS.map(n => <HTick key={n}>{n}</HTick>)}
              <HTick $last>16</HTick>
            </HRuler>
            <DocBody>
              <VRuler>
                {YLABELS.map(n => (
                  <VTick key={n}>{String(n).split('').map((d, i) => <Digit key={i}>{d}</Digit>)}</VTick>
                ))}
              </VRuler>
              <Canvas>
                <ShapeArt viewBox="0 0 114 217">
                  <rect x="6.500" y="6.500" width="101" height="204" fill="#d6d6d6" />
                  <path d="M55 0v217" stroke="#9ff3f5" strokeWidth="2" />
                  <rect x="6.500" y="6.500" width="101" height="204" fill="none" stroke="#4a86dc" strokeWidth="1.700" />
                  {handles.map(([x, y]) => (
                    <rect key={`${x}-${y}`} x={x - 3} y={y - 3} width="7" height="7" fill="#fff" stroke="#5b93e4" strokeWidth="1.300" />
                  ))}
                  {radii.map(([x, y]) => (
                    <g key={`${x}-${y}`}>
                      <circle cx={x + .5} cy={y + .5} r="4" fill="#c9dcf6" stroke="#4a86dc" strokeWidth="1.200" />
                      <circle cx={x + .5} cy={y + .5} r="1.500" fill="#2f6fd0" />
                    </g>
                  ))}
                  <g fill="none" stroke="#1c1c1c" strokeWidth="2">
                    <circle cx="58.500" cy="109.500" r="5.500" />
                    <path d="M58.500 99v5M58.500 115v5M48 109.500h5M64 109.500h5" />
                  </g>
                  <circle cx="58.500" cy="109.500" r="1" fill="#1c1c1c" />
                </ShapeArt>
                <Guide />
              </Canvas>
              <VScroll><Thumb /></VScroll>
            </DocBody>
          </Doc>

          <Strip>
            <DockHeader $right><Double /></DockHeader>
            <StripBox>
              <StripGrip />
              <IconButton aria-label="历史记录"><Icon n="history2" s={14} /></IconButton>
              <IconButton aria-label="注释"><Icon n="comment" s={14} /></IconButton>
            </StripBox>
          </Strip>

          <Panels>
            <DockHeader $right><Double right /></DockHeader>
            <Tabs $gap>
              <Tab $on>颜色</Tab><Tab>色板</Tab><Tab>渐变</Tab><Tab>图案</Tab>
              <PanelMenu aria-label="面板菜单" />
            </Tabs>
            <Tabs>
              <Tab $on>属性</Tab><Tab>调整</Tab><Tab>库</Tab>
              <PanelMenu aria-label="面板菜单" />
            </Tabs>
            <KindRow>
              <KindButton $on aria-label="形状"><Icon n="boundary" s={12} /></KindButton>
              <IconButton aria-label="蒙版"><Icon n="maskFull" s={14} /></IconButton>
              形状属性
            </KindRow>
            <PropsBody>
              <PropsMain>
                <Section $h={98}>
                  <SectionHead>
                    <Chevron />变换
                    <IconButton aria-label="重置"><Icon n="reset" s={12} /></IconButton>
                  </SectionHead>
                  <Transform>
                    <LinkCell><Icon n="linkV" s={13} /></LinkCell>
                    <Label htmlFor="pw">W</Label><Field $w={51} id="pw" defaultValue="2 像素" />
                    <Label htmlFor="px">X</Label><Field $w={51} id="px" defaultValue="1686 像素" />
                    <Label htmlFor="ph">H</Label><Field $w={51} id="ph" defaultValue="4 像素" />
                    <Label htmlFor="py">Y</Label><Field $w={51} id="py" defaultValue="327 像素" />
                  </Transform>
                  <AngleRow>
                    <Icon n="angle" s={13} />
                    <Combo w={40} value="0.00°" label="角度" />
                    <Flips>
                      <IconButton aria-label="水平翻转"><Icon n="flipH" s={14} /></IconButton>
                      <IconButton aria-label="垂直翻转"><Icon n="flipV" s={14} /></IconButton>
                    </Flips>
                  </AngleRow>
                </Section>
                <Section $h={181}>
                  <SectionHead><Chevron />外观</SectionHead>
                  <Row $h={24} $pad={31} $gap={6}><Label>填色</Label><Swatch aria-label="填色" /></Row>
                  <Row $h={22} $pad={25} $gap={5}><Label>描边</Label><IconButton aria-label="描边颜色"><NoStroke /></IconButton></Row>
                  <Row $h={23} $pad={48} $gap={6}>
                    <Combo w={53} value="1 像素" label="描边粗细" />
                    <DropButton $w={55} aria-label="线型"><LineSample /><Chevron /></DropButton>
                  </Row>
                  <Row $h={22} $pad={49} $gap={6}>
                    {['strokeAlign', 'caps', 'corners'].map(n => (
                      <DropButton key={n} $w={35} aria-label={n}><Icon n={n} s={12} /><Chevron /></DropButton>
                    ))}
                  </Row>
                  <CornerGrid>
                    <LinkButton aria-label="链接圆角"><Icon n="linkV" s={13} /></LinkButton>
                    <Icon n="cTL" s={13} />
                    <Field $w={46} aria-label="左上" defaultValue="0 像素" />
                    <Field $w={46} aria-label="右上" defaultValue="0 像素" />
                    <Icon n="cTR" s={13} />
                    <Icon n="cBL" s={13} />
                    <Field $w={46} aria-label="左下" defaultValue="0 像素" />
                    <Field $w={46} aria-label="右下" defaultValue="0 像素" />
                    <Icon n="cBR" s={13} />
                  </CornerGrid>
                  <Row $h={28} $pad={49} $gap={0}>
                    <Field $w={117} aria-label="圆角" defaultValue="0像素0像素0像素0像素" />
                  </Row>
                </Section>
                <div>
                  <SectionHead><Chevron />路径查找器</SectionHead>
                  <Row $h={22} $pad={19} $gap={2}>
                    {['unite', 'minus', 'intersect', 'exclude'].map((n, i) => (
                      <OpButton key={n} $on={i === 0} aria-label={n}><Icon n={n} s={12} /></OpButton>
                    ))}
                  </Row>
                </div>
              </PropsMain>
              <PropsScroll />
            </PropsBody>
            <Tabs>
              <Tab $on>图层</Tab><Tab>通道</Tab><Tab>路径</Tab>
              <PanelMenu aria-label="面板菜单" />
            </Tabs>
            <LayerBar $h={29} $top={5}>
              <TypeSelect $w={63}>
                <Icon n="search" s={9} />
                <Select aria-label="类型" $pad={16}><option>类型</option></Select>
                <Chevron />
              </TypeSelect>
              <IconSet $gap={8} $pad={6}>
                {['image', 'adjust', 'type', 'boundary', 'smart', 'toggle'].map(n => (
                  <IconButton key={n} aria-label={n}><Icon n={n} s={12} /></IconButton>
                ))}
              </IconSet>
            </LayerBar>
            <LayerBar $h={24}>
              <DropDown w={92} value="正常" label="混合模式" />
              <Label $w={38} htmlFor="op">不透明度:</Label>
              <Combo w={33} value="100%" label="不透明度" id="op" />
            </LayerBar>
            <LayerBar $h={26}>
              <Label $w={22} htmlFor="fl">锁定:</Label>
              <IconSet $gap={7} $pad={0}>
                {['lockPix', 'brush', 'move', 'artboard', 'lock'].map(n => (
                  <IconButton key={n} aria-label={n}><Icon n={n} s={11} /></IconButton>
                ))}
              </IconSet>
              <Label $w={19} htmlFor="fl">填充:</Label>
              <Combo w={33} value="100%" label="填充" id="fl" />
            </LayerBar>
            <LayerArea>
              <LayerList>
                <Layer><EyeToggle /><TextThumb><Icon n="type" s={11} /></TextThumb>22°C</Layer>
                <Layer><EyeToggle /><ShapeThumb />形状 1</Layer>
                <Layer>
                  <EyeToggle />
                  <GroupThumbIcon><Chevron right /><Icon n="folder" s={13} /></GroupThumbIcon>组 1
                </Layer>
                <Layer><EyeToggle /><ShapeThumb />矩形 2</Layer>
                <Layer $on><EyeToggle /><ShapeThumb on />矩形 4</Layer>
              </LayerList>
              <LayerScroll><LayerThumb /></LayerScroll>
            </LayerArea>
          </Panels>

          <Popover>
            <FillTypes>
              <FillType aria-label="无颜色">
                <Svg viewBox="0 0 14 12" $s={14}><rect width="14" height="12" fill="#fff" stroke="none" /><path d="M1 11 13 1" stroke="#d3343c" /></Svg>
              </FillType>
              <FillType $on aria-label="纯色">
                <Svg viewBox="0 0 14 12" $s={14}><path d="M.5.500h13v11H.5zM.5 4h13M.5 8h13M5 .5v11M9.500.5v11" strokeWidth="1" /></Svg>
              </FillType>
              <FillType aria-label="渐变">
                <Svg viewBox="0 0 14 12" $s={14}>
                  <defs>
                    <linearGradient id="toolGrad"><stop stopColor="#333" /><stop offset="1" stopColor="#ddd" /></linearGradient>
                  </defs>
                  <rect x=".5" y=".5" width="13" height="11" fill="url(#toolGrad)" strokeWidth="1" />
                </Svg>
              </FillType>
              <FillType aria-label="图案">
                <Svg viewBox="0 0 14 12" $s={14}>
                  <path d="M.5.500h13v11H.5zM.5 4h13M.5 8h13M5 .5v11M9.500.5v11" strokeWidth="1" />
                  <path d="M2.500 2v8M7 1v10M12 2v8" strokeDasharray="1.500 2.500" strokeWidth="1.500" />
                </Svg>
              </FillType>
              <Spacer />
              <Picker aria-label="拾色器" />
            </FillTypes>
            <RecentHead>
              最近使用的颜色
              <IconButton aria-label="设置"><Icon n="gear" s={9} /><Svg viewBox="0 0 4 4" $s={3}><circle cx="2.500" cy="3" r="1.200" fill={S} stroke="none" /></Svg></IconButton>
            </RecentHead>
            <Recents>{RECENTS.map((c, i) => <Recent key={i} $c={c} aria-label={c} />)}</Recents>
            <Groups>
              <GroupList>
                {GROUPS.map(g => <GroupRow key={g}><Chevron right /><Icon n="folder" s={13} /><span>{g}</span></GroupRow>)}
              </GroupList>
              <GroupScroll><GroupThumb /></GroupScroll>
            </Groups>
            <Grab>
              <Svg viewBox="0 0 8 8" $s={8}><path d="M0 8 8 0M4 8l4-4" stroke="#6a6a6a" strokeWidth="1" /></Svg>
            </Grab>
          </Popover>
        </Work>
      </Screen>
    </Page>
  );
}
